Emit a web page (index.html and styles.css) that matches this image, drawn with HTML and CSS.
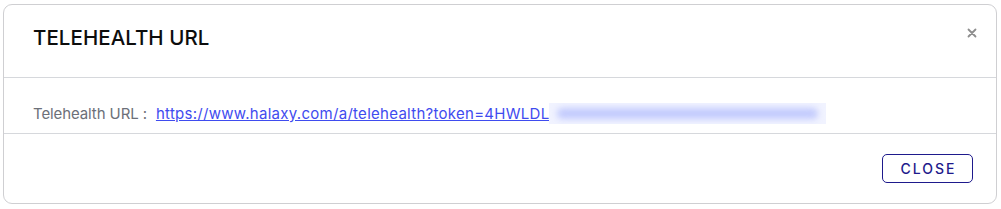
FILE: index.html
```html
<!DOCTYPE html>
<html>
<head>
<meta charset="utf-8">
<link rel="stylesheet" href="styles.css">
</head>
<body>
<div class="modal">
  <div class="modal-header">
    <h4 class="modal-title">TELEHEALTH URL</h4>
    <svg class="close-x" width="10" height="10" viewBox="0 0 10 10"><path d="M1.5 1.5 L8.5 8.5 M8.5 1.5 L1.5 8.5" stroke="#8e8e8e" stroke-width="1.8" stroke-linecap="round"/></svg>
  </div>
  <div class="modal-body">
    <span class="label">Telehealth URL :</span>
    <a class="link" href="#">https://www.halaxy.com/a/telehealth?token=4HWLDL</a><span class="blur"><span class="blur-inner"></span></span>
  </div>
  <div class="modal-footer">
    <button class="btn-close">CLOSE</button>
  </div>
</div>
</body>
</html>
```
FILE: styles.css
```css
html, body { margin: 0; padding: 0; background: #fff; }
body { padding: 4px 0 0 3px; font-family: Inter, "Noto Sans", sans-serif; }
.modal {
  width: 992px;
  height: 198px;
  border: 1px solid #cfcfd2;
  border-radius: 9px;
  display: flex;
  flex-direction: column;
}
.modal-header {
  height: 72px;
  border-bottom: 1px solid #d6d8dc;
  display: flex;
  align-items: center;
  justify-content: space-between;
  padding: 0 19px 0 29px;
}
.modal-title {
  margin: 0 0 8px 0;
  font-size: 20.5px;
  font-weight: 500;
  color: #0d0d0d;
  letter-spacing: 0.05px;
}
.close-x {
  display: block;
  margin-bottom: 17px;
}
.modal-body {
  height: 56px;
  border-bottom: 1px solid #d6d8dc;
  display: flex;
  align-items: center;
  padding: 16px 29px 0;
  box-sizing: border-box;
  font-size: 15px;
}
.label { color: #6c7079; margin-right: 9px; letter-spacing: -0.1px; }
.link { color: #3f4cef; text-decoration: underline; letter-spacing: 0.28px; }
.blur {
  display: inline-block;
  width: 277px;
  height: 21px;
  background: #f1f3ff;
  position: relative;
  overflow: hidden;
}
.blur-inner {
  position: absolute;
  left: 8px; right: 8px; top: 5px; bottom: 5px;
  background: #c3cbfd;
  border-radius: 6px;
  filter: blur(3px);
}
.modal-footer {
  flex: 1;
  display: flex;
  align-items: center;
  justify-content: flex-end;
  padding: 0 23px 0 0;
}
.btn-close {
  width: 91px;
  height: 29px;
  border: 1px solid #1e1a8c;
  border-radius: 5px;
  background: #fff;
  color: #1e1a8c;
  font-family: Inter, "Noto Sans", sans-serif;
  font-size: 14px;
  font-weight: 500;
  letter-spacing: 2px;
  padding: 0 0 0 2px;
}
```
